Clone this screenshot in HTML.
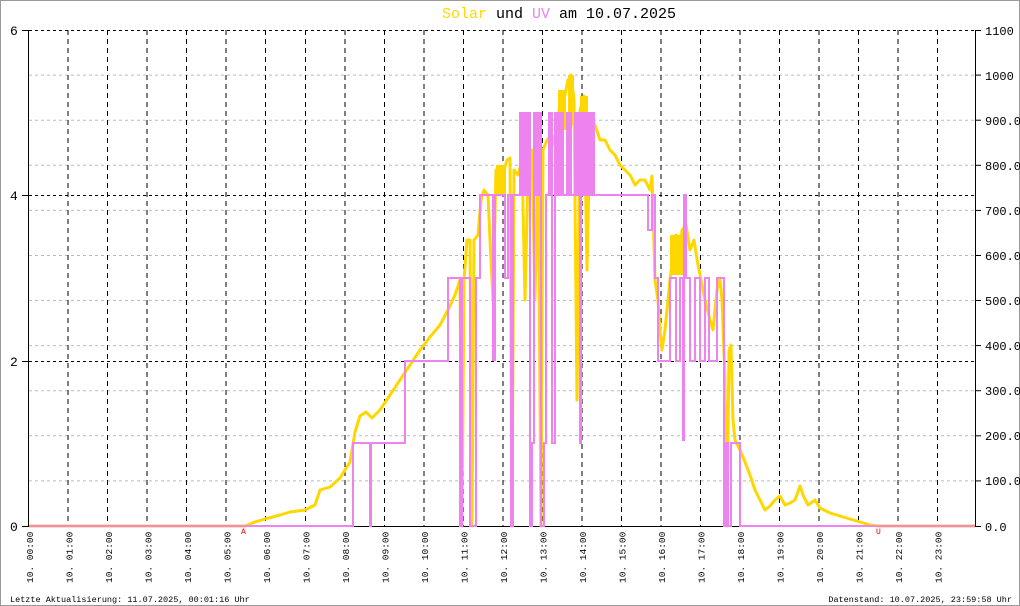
<!DOCTYPE html>
<html><head><meta charset="utf-8"><style>
html,body{margin:0;padding:0;background:#fff}
svg{display:block}
text{font-family:"Liberation Mono","DejaVu Sans Mono",monospace}
</style></head><body>
<svg width="1020" height="606" viewBox="0 0 1020 606" xmlns="http://www.w3.org/2000/svg">
<rect x="0.5" y="0.5" width="1019" height="605" fill="#fff" stroke="#999"/>
<text x="559" y="18" font-size="15" text-anchor="middle" fill="#000"><tspan fill="#FFD700">Solar</tspan> und <tspan fill="#EE82EE">UV</tspan> am 10.07.2025</text>
<g stroke="#bbb" stroke-width="1" stroke-dasharray="3,3">
<line x1="29" x2="975" y1="480.9" y2="480.9"/><line x1="29" x2="975" y1="435.8" y2="435.8"/>
<line x1="29" x2="975" y1="390.7" y2="390.7"/><line x1="29" x2="975" y1="345.6" y2="345.6"/>
<line x1="29" x2="975" y1="300.5" y2="300.5"/><line x1="29" x2="975" y1="255.5" y2="255.5"/>
<line x1="29" x2="975" y1="210.4" y2="210.4"/><line x1="29" x2="975" y1="165.3" y2="165.3"/>
<line x1="29" x2="975" y1="120.2" y2="120.2"/><line x1="29" x2="975" y1="75.1" y2="75.1"/>
</g>
<g stroke="#000" stroke-width="1" stroke-dasharray="3,3">
<line x1="29" x2="975" y1="30.5" y2="30.5"/><line x1="29" x2="975" y1="195.5" y2="195.5"/><line x1="29" x2="975" y1="361.5" y2="361.5"/>
</g>
<g stroke="#000" stroke-width="1" stroke-dasharray="5,4">
<line x1="68" x2="68" y1="30" y2="526"/><line x1="107.5" x2="107.5" y1="30" y2="526"/><line x1="147" x2="147" y1="30" y2="526"/><line x1="186.5" x2="186.5" y1="30" y2="526"/><line x1="226" x2="226" y1="30" y2="526"/><line x1="265.5" x2="265.5" y1="30" y2="526"/><line x1="305.5" x2="305.5" y1="30" y2="526"/><line x1="345" x2="345" y1="30" y2="526"/><line x1="384.5" x2="384.5" y1="30" y2="526"/><line x1="424" x2="424" y1="30" y2="526"/><line x1="463.5" x2="463.5" y1="30" y2="526"/><line x1="503" x2="503" y1="30" y2="526"/><line x1="542.5" x2="542.5" y1="30" y2="526"/><line x1="582" x2="582" y1="30" y2="526"/><line x1="621.5" x2="621.5" y1="30" y2="526"/><line x1="661" x2="661" y1="30" y2="526"/><line x1="700.5" x2="700.5" y1="30" y2="526"/><line x1="740" x2="740" y1="30" y2="526"/><line x1="779.5" x2="779.5" y1="30" y2="526"/><line x1="819" x2="819" y1="30" y2="526"/><line x1="858.5" x2="858.5" y1="30" y2="526"/><line x1="898" x2="898" y1="30" y2="526"/><line x1="937.5" x2="937.5" y1="30" y2="526"/>
</g>
<g stroke="#000" stroke-width="1">
<line x1="28.5" x2="28.5" y1="30" y2="526"/><line x1="975.5" x2="975.5" y1="30" y2="526"/><line x1="28" x2="976" y1="526.5" y2="526.5"/>
<line x1="22" x2="29" y1="30.5" y2="30.5"/><line x1="22" x2="29" y1="195.5" y2="195.5"/><line x1="22" x2="29" y1="361.5" y2="361.5"/><line x1="22" x2="29" y1="526.5" y2="526.5"/>
<line x1="975" x2="981" y1="30.5" y2="30.5"/><line x1="975" x2="981" y1="75.1" y2="75.1"/><line x1="975" x2="981" y1="120.2" y2="120.2"/><line x1="975" x2="981" y1="165.3" y2="165.3"/><line x1="975" x2="981" y1="210.4" y2="210.4"/><line x1="975" x2="981" y1="255.5" y2="255.5"/><line x1="975" x2="981" y1="300.5" y2="300.5"/><line x1="975" x2="981" y1="345.6" y2="345.6"/><line x1="975" x2="981" y1="390.7" y2="390.7"/><line x1="975" x2="981" y1="435.8" y2="435.8"/><line x1="975" x2="981" y1="480.9" y2="480.9"/><line x1="975" x2="981" y1="526.5" y2="526.5"/>
</g>
<g font-size="13" fill="#000">
<text x="10" y="35">6</text><text x="10" y="200">4</text><text x="10" y="366">2</text><text x="10" y="531">0</text>
</g>
<g font-size="12" fill="#000">
<text x="985" y="35">1100</text><text x="985" y="80">1000</text><text x="985" y="125">900.0</text><text x="985" y="170">800.0</text><text x="985" y="215">700.0</text><text x="985" y="260">600.0</text><text x="985" y="305">500.0</text><text x="985" y="350">400.0</text><text x="985" y="395">300.0</text><text x="985" y="440">200.0</text><text x="985" y="485">100.0</text><text x="985" y="531">0.0</text>
</g>
<!-- solar fill blobs in noisy region -->
<g fill="#FFD700">
<rect x="558" y="90" width="8" height="40"/><rect x="568" y="75" width="6" height="50"/><rect x="580" y="96" width="8" height="30"/><rect x="496" y="165" width="10" height="30"/><rect x="670" y="235" width="16" height="40"/>
</g>
<polyline fill="none" stroke="#FFD700" stroke-width="3" stroke-linejoin="round" points="29,526 245,526 255,522 265,519 280,515 290,512 305,510 315,505 320,490 330,487 340,478 350,462 355,432 360,416 366,412 372,418 380,410 390,395 400,380 410,365 420,350 430,337 440,325 448,310 455,295 460,280 462,526 464,280 467,240 470,240 472,526 474,240 478,235 481,200 484,190 488,195 490,240 493,300 496,170 500,190 504,170 507,160 510,158 512,526 514,170 518,175 522,160 525,300 528,175 532,150 535,300 538,145 541,526 543,150 547,140 552,135 556,150 560,100 565,95 568,80 571,75 574,100 577,400 580,110 584,96 587,270 590,130 595,125 600,140 605,140 610,150 615,155 620,165 625,170 630,175 635,185 640,180 645,180 650,190 652,176 655,280 658,300 660,330 662,350 665,330 670,280 673,255 676,235 679,260 682,230 686,225 690,250 694,240 698,265 702,285 705,300 710,320 713,330 717,290 720,278 722,300 725,380 727,526 729,350 731,345 733,420 735,440 740,450 745,462 750,475 755,490 760,500 765,510 770,506 775,500 780,496 785,505 790,503 795,500 800,486 803,495 808,505 815,500 820,508 830,513 840,516 850,519 860,522 870,525 878,526 975,526"/>
<g fill="#EE82EE">
<rect x="520" y="113" width="10" height="83"/><rect x="535" y="113" width="6" height="83"/><rect x="549" y="113" width="3" height="83"/><rect x="555" y="113" width="8" height="83"/><rect x="567" y="113" width="4" height="83"/><rect x="575" y="113" width="5" height="83"/><rect x="581" y="113" width="8" height="83"/><rect x="591" y="113" width="3" height="83"/>
</g>
<polyline fill="none" stroke="#EE82EE" stroke-width="2" points="29,526 353,526 353,443 370,443 370,526 371,526 371,443 405,443 405,361 448,361 448,278 460,278 460,526 462,526 462,278 470,278 470,526 476,526 476,278 480,278 480,195 493,195 493,360 495,360 495,195 505,195 505,278 508,278 508,195 511,195 511,526 513,526 513,195 520,195 520,113 530,113 530,526 532,526 532,443 534,443 534,113 541,113 541,526 544,526 544,443 546,443 546,195 549,195 549,113 552,113 552,443 555,443 555,113 563,113 563,195 567,195 567,113 571,113 571,195 575,195 575,113 580,113 580,443 581,443 581,113 589,113 589,195 591,195 591,113 594,113 594,195 648,195 648,230 652,230 652,195 655,195 655,278 658,278 658,361 670,361 670,278 676,278 676,361 680,361 680,278 683,278 683,440 684,440 684,195 686,195 686,278 690,278 690,361 695,361 695,278 700,278 700,361 705,361 705,278 709,278 709,361 717,361 717,278 724,278 724,526 726,526 726,443 728,443 728,526 731,526 731,443 740,443 740,526 975,526"/>
<text x="241" y="534" font-size="8" fill="#e00">A</text>
<text x="876" y="534" font-size="8" fill="#e00">U</text>
<g font-size="9.5" fill="#000">
<text transform="translate(33,583) rotate(-90)">10. 00:00</text><text transform="translate(72.5,583) rotate(-90)">10. 01:00</text><text transform="translate(112,583) rotate(-90)">10. 02:00</text><text transform="translate(151.5,583) rotate(-90)">10. 03:00</text><text transform="translate(191,583) rotate(-90)">10. 04:00</text><text transform="translate(230.5,583) rotate(-90)">10. 05:00</text><text transform="translate(270,583) rotate(-90)">10. 06:00</text><text transform="translate(309.5,583) rotate(-90)">10. 07:00</text><text transform="translate(349,583) rotate(-90)">10. 08:00</text><text transform="translate(388.5,583) rotate(-90)">10. 09:00</text><text transform="translate(428,583) rotate(-90)">10. 10:00</text><text transform="translate(467.5,583) rotate(-90)">10. 11:00</text><text transform="translate(507,583) rotate(-90)">10. 12:00</text><text transform="translate(546.5,583) rotate(-90)">10. 13:00</text><text transform="translate(586,583) rotate(-90)">10. 14:00</text><text transform="translate(625.5,583) rotate(-90)">10. 15:00</text><text transform="translate(665,583) rotate(-90)">10. 16:00</text><text transform="translate(704.5,583) rotate(-90)">10. 17:00</text><text transform="translate(744,583) rotate(-90)">10. 18:00</text><text transform="translate(783.5,583) rotate(-90)">10. 19:00</text><text transform="translate(823,583) rotate(-90)">10. 20:00</text><text transform="translate(862.5,583) rotate(-90)">10. 21:00</text><text transform="translate(902,583) rotate(-90)">10. 22:00</text><text transform="translate(941.5,583) rotate(-90)">10. 23:00</text>
</g>
<text x="10" y="602" font-size="8.5" fill="#000">Letzte Aktualisierung: 11.07.2025, 00:01:16 Uhr</text>
<text x="1012" y="602" font-size="8.5" fill="#000" text-anchor="end">Datenstand: 10.07.2025, 23:59:58 Uhr</text>
</svg>
</body></html>
